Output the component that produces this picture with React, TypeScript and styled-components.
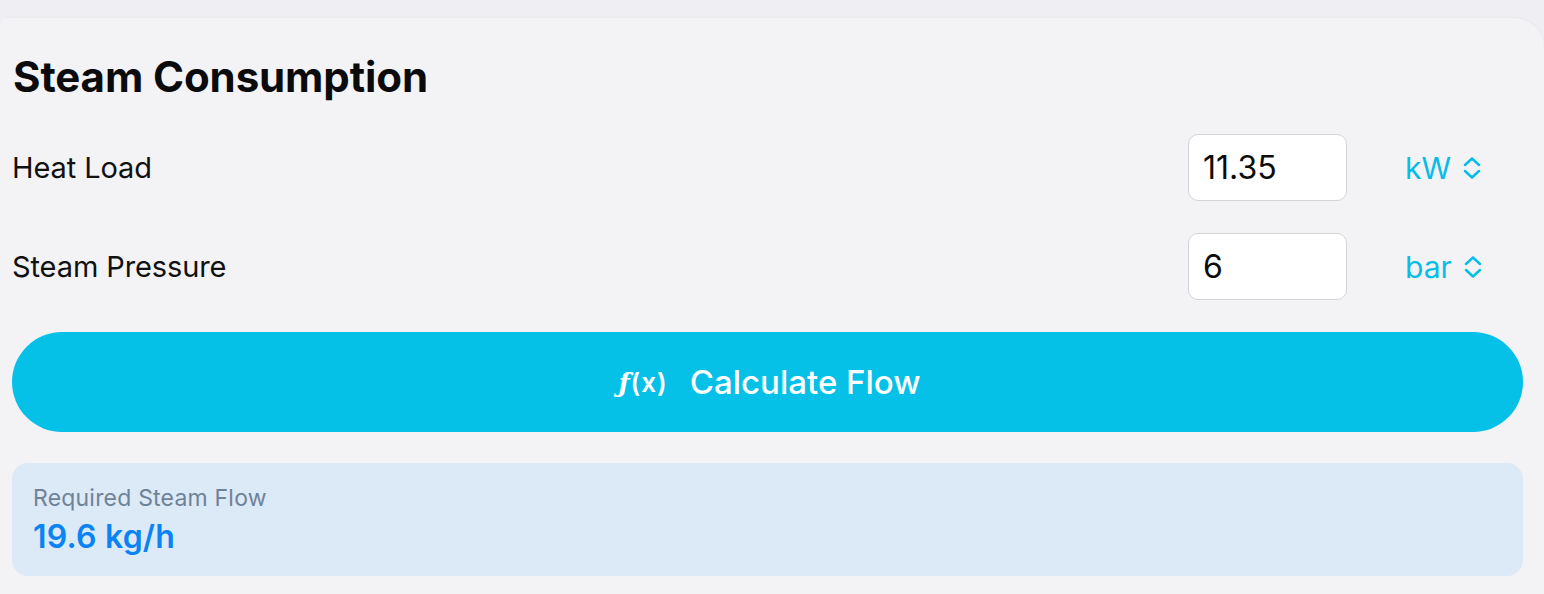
import React from "react";
import styled, { createGlobalStyle } from "styled-components";

const Global = createGlobalStyle`
  html, body { margin: 0; padding: 0; background: #ececf0; }
  body { font-family: Inter, "Noto Sans", "Liberation Sans", sans-serif; -webkit-font-smoothing: antialiased; }
  * { box-sizing: border-box; }
`;

const Page = styled.div`
  width: 1544px;
  height: 594px;
  overflow: hidden;
  padding-top: 18px;
  background: #efeff3;
`;

const Card = styled.div`
  background: #f3f3f6;
  border-radius: 6px 30px 0 0;
  height: 100%;
  padding: 34px 21px 0 12px;
  display: flex;
  flex-direction: column;
  box-shadow: 0 -1px 2px rgba(0, 0, 0, 0.03);
`;

const Title = styled.h1`
  margin: 0 0 32px;
  font-size: 42px;
  line-height: 50px;
  font-weight: 700;
  color: #0b0b0d;
  padding-left: 1px;
  letter-spacing: -0.1px;
`;

const Row = styled.div`
  display: grid;
  grid-template-columns: 1fr 159px 118px;
  column-gap: 58px;
  align-items: center;
  height: 67px;
  margin-bottom: 32px;
  &:nth-of-type(3) { margin-bottom: 30px; }
`;

const Label = styled.span`
  font-size: 29px;
  color: #111;
  letter-spacing: -0.1px;
`;

const Field = styled.div`
  height: 67px;
  background: #fff;
  border: 1px solid #d4d4d8;
  border-radius: 10px;
  display: flex;
  align-items: center;
  padding-left: 14px;
  font-size: 32px;
  color: #0c0c0c;
`;

const Unit = styled.div`
  display: flex;
  align-items: center;
  gap: 12px;
  font-size: 30px;
  color: #05bde6;
`;

const Button = styled.button`
  height: 100px;
  border: none;
  border-radius: 50px;
  background: #05c1e8;
  color: #fff;
  display: flex;
  align-items: center;
  justify-content: center;
  gap: 22px;
  font-family: inherit;
  font-size: 33px;
  font-weight: 500;
  cursor: pointer;
  margin-bottom: 31px;
`;

const Fx = styled.span`
  font-size: 26px;
  font-weight: 600;
  letter-spacing: 1px;
  margin-left: 4px;
  i { font-style: italic; font-family: "DejaVu Serif", serif; }
`;

const Result = styled.div`
  height: 113px;
  background: #dce9f6;
  border-radius: 16px;
  padding: 20px 21px;
  display: flex;
  flex-direction: column;
  gap: 5px;
`;

const ResultLabel = styled.span`
  font-size: 23px;
  line-height: 30px;
  color: #6f8398;
  letter-spacing: 0.2px;
`;

const ResultValue = styled.span`
  font-size: 32px;
  line-height: 38px;
  font-weight: 600;
  color: #0a84f5;
  letter-spacing: 0.2px;
`;

const Chevrons = () => (
  <svg width="18" height="22" viewBox="0 0 18 22" fill="none" stroke="#05bde6" strokeWidth="2.4" strokeLinecap="round" strokeLinejoin="round">
    <path d="M2 8 L9 1.5 L16 8" />
    <path d="M2 14 L9 20.5 L16 14" />
  </svg>
);

const rows = [
  { label: "Heat Load", value: "11.35", unit: "kW" },
  { label: "Steam Pressure", value: "6", unit: "bar" },
];

export default function App() {
  return (
    <>
      <Global />
      <Page>
        <Card>
          <Title>Steam Consumption</Title>
          {rows.map((r) => (
            <Row key={r.label}>
              <Label>{r.label}</Label>
              <Field>{r.value}</Field>
              <Unit>
                {r.unit}
                <Chevrons />
              </Unit>
            </Row>
          ))}
          <Button>
            <Fx>
              <i>ƒ</i>(x)
            </Fx>
            Calculate Flow
          </Button>
          <Result>
            <ResultLabel>Required Steam Flow</ResultLabel>
            <ResultValue>19.6 kg/h</ResultValue>
          </Result>
        </Card>
      </Page>
    </>
  );
}
